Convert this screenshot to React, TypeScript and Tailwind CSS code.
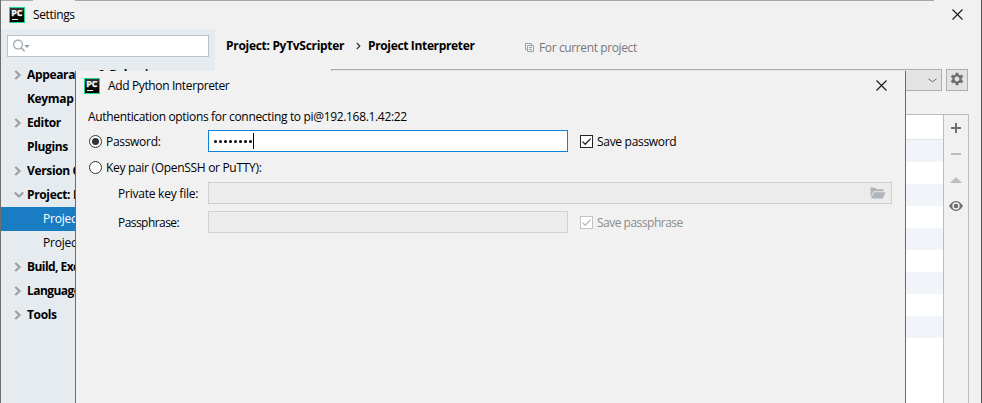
import React from "react";

function Logo() {
  return (
    <svg width="16" height="16" viewBox="0 0 16 16" className="block shrink-0">
      <defs>
        <linearGradient id="logoFill" x1="0" y1="0" x2="0" y2="1">
          <stop offset="0" stopColor="#3a3a3a" />
          <stop offset="0.6" stopColor="#050505" />
        </linearGradient>
      </defs>
      <rect width="16" height="16" fill="#21d789" />
      <rect x="1" y="1" width="14" height="14" fill="url(#logoFill)" />
      <text x="2.2" y="8.8" fontSize="8" fontWeight="700" fill="#fff" stroke="#fff" strokeWidth=".25" fontFamily="Open Sans, sans-serif" textLength="11.2" lengthAdjust="spacingAndGlyphs">PC</text>
      <rect x="3" y="12" width="6" height="1" fill="#fff" />
    </svg>
  );
}

function Close() {
  return (
    <svg width="11" height="11" viewBox="0 0 11 11" className="block shrink-0">
      <path d="M.5.5l10 10M10.5.5l-10 10" stroke="#1a1a1a" strokeWidth="1.15" fill="none" />
    </svg>
  );
}

type Row = { label: string; arrow?: "right" | "down"; child?: boolean; selected?: boolean; tight?: boolean };

const rows: Row[] = [
  { label: "Appearance & Behavior", arrow: "right" },
  { label: "Keymap" },
  { label: "Editor", arrow: "right" },
  { label: "Plugins" },
  { label: "Version Control", arrow: "right" },
  { label: "Project: PyTvScripter", arrow: "down" },
  { label: "Project Interpreter", child: true, selected: true },
  { label: "Project Structure", child: true },
  { label: "Build, Execution, Deployment", arrow: "right", tight: true },
  { label: "Languages & Frameworks", arrow: "right", tight: true },
  { label: "Tools", arrow: "right" },
];

function TreeRow({ row }: { row: Row }) {
  const text = row.child ? "tracking-[-0.2px]" : row.tight ? "font-bold tracking-[-0.55px]" : "font-bold tracking-[-0.35px]";
  return (
    <div className={"flex h-6 items-center whitespace-nowrap " + (row.selected ? "bg-[#1a7dc4] text-white" : "")}>
      <div className={row.child ? "w-[42px] shrink-0" : "w-[26px] shrink-0 pl-[13px]"}>
        {row.arrow === "right" && (
          <svg width="8" height="10" viewBox="0 0 8 10" className="block">
            <path d="M1.3 .9L5.6 5L1.3 9.1" stroke="#9b9fa2" strokeWidth="2.1" fill="none" />
          </svg>
        )}
        {row.arrow === "down" && (
          <svg width="10" height="8" viewBox="0 0 10 8" className="block">
            <path d="M.8 1.4L5 5.6L9.2 1.4" stroke="#9b9fa2" strokeWidth="2.1" fill="none" />
          </svg>
        )}
      </div>
      <span className={text}>{row.label}</span>
    </div>
  );
}

function Check({ color, border }: { color: string; border: string }) {
  return (
    <svg width="13" height="13" viewBox="0 0 13 13" className="block shrink-0">
      <rect x=".5" y=".5" width="12" height="12" fill="#fff" stroke={border} />
      <path d="M2.5 6.6L5.2 9.3L10.6 3.6" stroke={color} strokeWidth="1.3" fill="none" />
    </svg>
  );
}

function Radio({ checked }: { checked?: boolean }) {
  return (
    <svg width="13" height="13" viewBox="0 0 13 13" className="block shrink-0">
      <circle cx="6.5" cy="6.5" r="6" fill="#fff" stroke="#333" />
      {checked && <circle cx="6.5" cy="6.5" r="3.5" fill="#333" />}
    </svg>
  );
}

function Dialog() {
  return (
    <div className="absolute left-[74px] top-[70px] h-[333px] w-[831px] whitespace-nowrap pt-px">
      <div className="h-[332px] border-x border-[#6b6b6b] bg-[#f1f1f1]">
        <div className="flex h-[30px] items-start justify-between pl-2 pr-[18px] pt-[7px]">
          <div className="flex items-center gap-2">
            <Logo />
            <span className="tracking-[-0.37px]">Add Python Interpreter</span>
          </div>
          <div className="pt-0.5"><Close /></div>
        </div>
        <div className="pl-3">
          <div className="flex h-[29px] items-start pt-2">
            <span className="tracking-[-0.33px]">Authentication options for connecting to pi@192.168.1.42:22</span>
          </div>
          <div className="flex h-[22px] items-center pl-px">
            <div className="flex h-[22px] w-[119px] shrink-0 items-center gap-1 pt-px">
              <Radio checked />
              <span className="pt-px tracking-[-0.3px]">Password:</span>
            </div>
            <div className="flex h-[22px] w-[360px] items-center border border-[#0f82d8] bg-white pl-[5px]">
              <div className="flex gap-[2px] pt-px">
                {Array.from({ length: 8 }, (_, i) => <i key={i} className="size-[3px] rounded-full bg-black" />)}
              </div>
              <div className="ml-px h-4 w-px bg-black" />
            </div>
            <div className="ml-3 flex h-[22px] items-center gap-1 pt-px">
              <Check color="#222" border="#222" />
              <span className="pt-px tracking-[-0.3px]">Save password</span>
            </div>
          </div>
          <div className="flex h-[30px] items-center gap-1 pl-px pt-px">
            <Radio />
            <span className="pt-px tracking-[-0.31px]">Key pair (OpenSSH or PuTTY):</span>
          </div>
          <div className="flex h-[22px] items-center pl-[30px]">
            <span className="w-[90px] shrink-0 pt-0.5 tracking-[-0.23px]">Private key file:</span>
            <div className="flex h-[22px] w-[684px] items-center justify-end border border-[#cfcfcf] bg-[#ececec] pr-[5px]">
              <svg width="16" height="12" viewBox="0 0 16 12" className="block">
                <path d="M.5 10.5V.5H5L6.5 2.2H13.5V4.2H3.5Z" fill="#afb5ba" />
                <path d="M4 5.2H15.5L12.7 11.5H1Z" fill="#afb5ba" />
              </svg>
            </div>
          </div>
          <div className="mt-[7px] flex h-[22px] items-center pl-[30px]">
            <span className="w-[90px] shrink-0 pt-0.5 tracking-[-0.55px]">Passphrase:</span>
            <div className="h-[22px] w-[360px] border border-[#cfcfcf] bg-[#ececec]" />
            <div className="ml-3 flex h-[22px] items-center gap-1 pt-px text-[#8c8c8c]">
              <Check color="#bcbcbc" border="#c4c4c4" />
              <span className="pt-px tracking-[-0.5px]">Save passphrase</span>
            </div>
          </div>
        </div>
      </div>
    </div>
  );
}

export default function App() {
  return (
    <div className="relative flex h-[403px] w-[982px] flex-col overflow-hidden border-x border-l-[#6e6e6e] border-r-[#555] bg-[#f1f1f1] font-['Open_Sans','Noto_Sans',sans-serif] text-[12px] leading-4 text-black">
      <div className="flex h-px shrink-0">
        <div className="w-8 bg-[#a8a8a8]" />
        <div className="w-[42px]" />
        <div className="w-[859px] bg-[#a8a8a8]" />
      </div>
      <div className="flex h-7 shrink-0 items-start justify-between pl-2 pr-[18px] pt-1.5">
        <div className="flex items-center gap-2">
          <Logo />
          <span className="tracking-[-0.35px]">Settings</span>
        </div>
        <div className="pt-0.5"><Close /></div>
      </div>
      <div className="flex min-h-0 flex-1">
        <div className="w-[214px] shrink-0 overflow-hidden bg-[#e6ebf0] pt-1.5">
          <div className="ml-1.5 flex h-[22px] w-[202px] items-center border border-[#bfc2c5] bg-white pl-[5px]">
            <svg width="18" height="14" viewBox="0 0 18 14" className="block">
              <circle cx="5" cy="5.6" r="4.4" stroke="#9aa5ae" strokeWidth="1.2" fill="none" />
              <path d="M8.2 8.8L11.6 12.2" stroke="#9aa5ae" strokeWidth="1.5" />
              <path d="M11.3 6H16.7L14 9Z" fill="#8f9ba5" />
            </svg>
          </div>
          <div className="pt-1.5">
            {rows.map((r) => <TreeRow key={r.label} row={r} />)}
          </div>
        </div>
        <div className="flex min-w-0 flex-1 flex-col">
          <div className="flex h-10 shrink-0 items-start pl-[11px]">
            <div className="flex items-center pt-[9px] font-bold">
              <span className="w-[130px] tracking-[-0.3px]">Project: PyTvScripter</span>
              <svg width="5" height="8" viewBox="0 0 5 8" className="block shrink-0"><path d="M.8 1L3.8 4L.8 7" stroke="#333" strokeWidth="1.2" fill="none" /></svg>
              <span className="w-[164px] pl-[7px] tracking-[-0.35px]">Project Interpreter</span>
            </div>
            <div className="flex items-center gap-1 pt-[11px] text-[#787878]">
              <svg width="10" height="10" viewBox="0 0 10 10" className="block">
                <path d="M2 6.5H.5V.5H6.5V2M2.5 2.5H8.5V8.5H2.5ZM4 4.5H7M4 6.5H7" stroke="#9ba3a9" fill="none" />
              </svg>
              <span className="tracking-[-0.38px]">For current project</span>
            </div>
          </div>
          <div className="flex h-[22px] shrink-0 gap-1 pl-[116px]">
            <div className="flex w-[611px] items-center justify-end border border-[#adadad] bg-[#e3e3e3] pr-1">
              <svg width="9" height="5" viewBox="0 0 9 5" className="block"><path d="M.5 .8L4.5 3.8L8.5 .8" stroke="#686868" fill="none" /></svg>
            </div>
            <div className="flex size-[22px] items-start justify-center border border-[#adadad] bg-[#e3e3e3] pt-0.5">
              <svg width="14" height="14" viewBox="0 0 14 14" className="block">
                <circle cx="7" cy="7" r="3.6" stroke="#6e6e6e" strokeWidth="2.3" fill="none" />
                <path d="M7 .7V3M7 11V13.3M1.5 3.8L3.5 5M10.5 9L12.5 10.2M1.5 10.2L3.5 9M10.5 5L12.5 3.8" stroke="#6e6e6e" strokeWidth="2.8" />
              </svg>
            </div>
          </div>
          <div className="ml-[116px] mt-[23px] flex min-h-0 w-[638px] flex-1 border-r border-t border-[#bdbdbd]">
            <div className="flex-1 overflow-hidden bg-white">
              <div className="h-[25px] border-b border-[#e3e3e3]" />
              {Array.from({ length: 9 }, (_, i) => (
                <div key={i} className={i % 2 === 0 ? "h-[22px] bg-[#f1f5fa]" : "h-[22px] bg-white"} />
              ))}
            </div>
            <div className="flex w-[25px] flex-col items-center border-l border-[#bdbdbd] pt-2">
              <svg width="14" height="90" viewBox="0 0 14 90" className="block">
                <path d="M2 5H12M7 0V10" stroke="#6e6e6e" strokeWidth="2" />
                <path d="M2 31H12" stroke="#bdbdbd" strokeWidth="2" />
                <path d="M1 60L7 54L13 60Z" fill="#bdbdbd" />
                <path d="M0 83C2.2 79.4 4.5 78 7 78S11.8 79.4 14 83C11.8 86.6 9.5 88 7 88S2.2 86.6 0 83Z" fill="#6e6e6e" />
                <circle cx="7" cy="83" r="3" stroke="#f1f1f1" strokeWidth="1.4" fill="#6e6e6e" />
              </svg>
            </div>
          </div>
        </div>
      </div>
      <Dialog />
    </div>
  );
}
